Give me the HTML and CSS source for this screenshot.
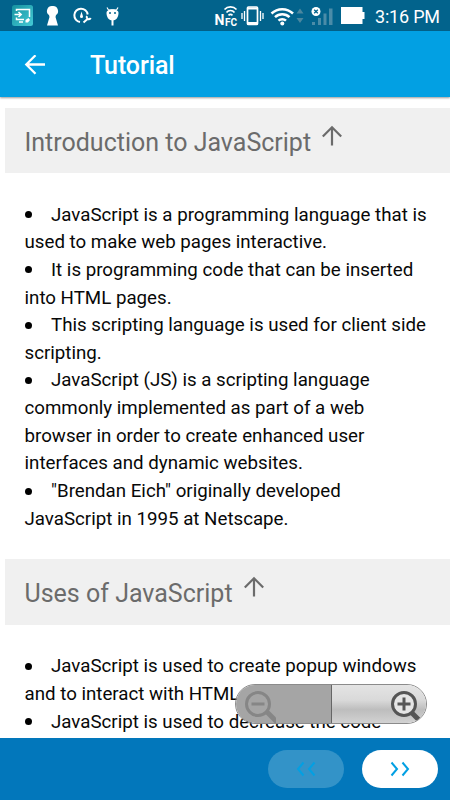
FILE: index.html
```html
<!DOCTYPE html>
<html lang="en">
<head>
<meta charset="utf-8">
<title>Tutorial</title>
<link rel="stylesheet" href="styles.css">
</head>
<body>
<div class="screen">
  <div class="status">
    <svg class="status-icons" width="370" height="31" viewBox="0 0 370 31" fill="none" stroke="#fff">
      <defs><linearGradient id="app" x1="0" y1="0" x2="1" y2="1"><stop offset="0" stop-color="#16919f"/><stop offset="1" stop-color="#45cbd6"/></linearGradient></defs>
      <rect x="12" y="5" width="21" height="21" rx="2.5" fill="url(#app)" stroke="none"/>
      <path d="M16.500 11V9.500H29.500V17M16.500 17.500v2h7.500M19 22h4M14.500 14.500h6M18.500 12l2.700 2.500L18.500 17" stroke-width="1.500"/>
      <path d="M25.500 20l3-2 1.500 2-2 2.500h-2.500z" fill="#fff" stroke="none"/>
      <path d="M52.500 6a5 5 0 0 1 3.500 9l-.5 2 2.500 8.500H47l2.500-8.500-.5-2a5 5 0 0 1 3.500-9z" fill="#fff" stroke="none"/>
      <path d="M80 22A6.700 6.700 0 1 1 87.700 14.500" stroke-width="2"/>
      <path d="M81.500 11.500l1.500 5a1.500 1.500 0 0 1-3 0z" fill="#fff" stroke="none"/>
      <path d="M83.500 22.500l4-3.500M87 16a2 2 0 0 0 3.700 2" stroke-width="2"/>
      <path d="M107 7.500l1.500 2.500h8l1.500-2.500" stroke-width="1.200"/>
      <path d="M106.500 13c0-5 12-5 12 0 0 4.500-2.500 7.500-6 7.500s-6-3-6-7.500z" fill="#fff" stroke="none"/>
      <path d="M112.500 20v5.500" stroke-width="2"/>
      <circle cx="110" cy="13" r="1" fill="#02638c" stroke="none"/><circle cx="115" cy="13" r="1" fill="#02638c" stroke="none"/>
      <path d="M224.500 9.500a8 8 0 0 1 12 0M226.500 12.500a5 5 0 0 1 8 0M228.500 15.300a3 3 0 0 1 4 0" stroke-width="1.700"/>
      <text class="nfc-n" x="214.500" y="24.500">N</text><text class="nfc-fc" x="225" y="25.500">FC</text>
      <rect x="247.500" y="7" width="10" height="17.500" rx="1" stroke-width="1.700"/>
      <path d="M247 8.500h11M247 23h11" stroke-width="2"/>
      <path d="M244.500 11v10M242 13v6M260.500 11v10M263 13v6" stroke-width="1.300"/>
      <path d="M271.500 13.500a15.500 15.500 0 0 1 21.500 0M275 17.200a10.500 10.500 0 0 1 14.500 0M278.500 20.700a5.300 5.300 0 0 1 7.500 0" stroke-width="2.500"/>
      <circle cx="282.300" cy="23.500" r="2" fill="#fff" stroke="none"/>
      <path d="M296.500 13.500l3.500-5 3.500 5zM296.500 18l3.500 5 3.500-5z" fill="#4b879f" stroke="none"/>
      <path d="M312 22h3v3h-3zM318 18h3v7h-3zM323.500 13.500h3v11.500h-3zM329 8.500h3.500v16.500H329z" fill="#4b8ca8" stroke="none"/>
      <circle cx="316" cy="11.500" r="4.500" fill="#fff" stroke="none"/>
      <path d="M314.200 9.700l3.600 3.600m0-3.600l-3.600 3.600" stroke="#02638c" stroke-width="1.300"/>
      <path d="M341 7h21.500v5h2v7h-2v5H341z" fill="#fff" stroke="none"/>
    </svg>
    <span class="clock">3:16 PM</span>
  </div>
  <header class="toolbar">
    <svg width="22" height="22" viewBox="0 0 22 22" fill="none" stroke="#fff" stroke-width="2.300"><path d="M21 9.500H3M11.500 .3L2.300 9.500l9.200 9.200"/></svg>
    <h1>Tutorial</h1>
  </header>
  <main class="content">
    <h2><span>Introduction to JavaScript</span><svg width="22" height="22" viewBox="0 0 22 22"><path d="M11 20.500V3M1.800 11.500L11 2.300l9.200 9.200"/></svg></h2>
    <ul>
      <li>JavaScript is a programming language that is<br>used to make web pages interactive.</li>
      <li>It is programming code that can be inserted<br>into HTML pages.</li>
      <li>This scripting language is used for client side<br>scripting.</li>
      <li>JavaScript (JS) is a scripting language<br>commonly implemented as part of a web<br>browser in order to create enhanced user<br>interfaces and dynamic websites.</li>
      <li>"Brendan Eich" originally developed<br>JavaScript in 1995 at Netscape.</li>
    </ul>
    <h2 class="second"><span>Uses of JavaScript</span><svg width="22" height="22" viewBox="0 0 22 22"><path d="M11 20.500V3M1.800 11.500L11 2.300l9.200 9.200"/></svg></h2>
    <ul>
      <li>JavaScript is used to create popup windows<br>and to interact with HTML</li>
      <li>JavaScript is used to decrease the code</li>
    </ul>
  </main>
  <div class="zoom">
    <div class="zoom-out"><svg width="40" height="38" viewBox="0 0 40 38" fill="none" stroke="#868686"><path d="M31 27l10 10" stroke-width="5"/><circle cx="22" cy="19" r="11.500" stroke-width="3"/><path d="M15.500 19h13" stroke-width="3"/></svg></div>
    <div class="zoom-in"><svg width="38" height="38" viewBox="0 0 38 38" fill="none" stroke="#555"><path d="M23 27l10 10" stroke-width="5"/><circle cx="16" cy="19" r="11.500" fill="#e5e5e5" stroke-width="3"/><path d="M9.500 19h13M16 12.500v13" stroke-width="3"/></svg></div>
  </div>
  <footer class="bottom">
    <div class="pill disabled"><svg width="20" height="16" viewBox="0 0 20 16"><path d="M7.500 1.500L2 8l5.500 6.500M18.500 1.500L13 8l5.500 6.500"/></svg></div>
    <div class="pill"><svg width="20" height="16" viewBox="0 0 20 16"><path d="M1.500 1.500L7 8l-5.500 6.500M12.500 1.500L18 8l-5.500 6.500"/></svg></div>
  </footer>
</div>
</body>
</html>
```
FILE: styles.css
```css
* { box-sizing: border-box; }
body { margin: 0; font-family: Roboto, sans-serif; background: #fff; }
.screen { width: 450px; height: 800px; display: flex; flex-direction: column; overflow: hidden; position: relative; }
.status { height: 31px; flex: none; background: #02638c; display: flex; color: #fff; }
.clock { font-size: 18px; line-height: 34px; margin-left: 5px; white-space: nowrap; letter-spacing: -.2px; }
.nfc-n, .nfc-fc { font-family: Roboto, sans-serif; font-weight: 700; fill: #fff; stroke: none; }
.nfc-n { font-size: 14px; }
.nfc-fc { font-size: 10px; }
.toolbar { height: 66px; flex: none; background: #02a0e3; display: flex; align-items: center; padding: 3px 0 0 24px; box-shadow: 0 1px 2px rgba(0,0,0,.4); z-index: 1; }
h1 { margin: 1px 0 0 44px; font-size: 25px; font-weight: 500; color: #fff; line-height: 30px; letter-spacing: -.1px; }
.content { flex: 1; min-height: 0; overflow: hidden; padding: 11px 0 0 5px; }
h2 { margin: 0; height: 65px; background: #f0f0f0; padding: 3px 0 0 19.500px; display: flex; align-items: center; color: #6b6b6b; font-size: 25px; font-weight: 400; white-space: nowrap; }
h2 svg { margin: -13px 0 0 10px; fill: none; stroke: #6b6b6b; stroke-width: 2.2; }
h2.second { height: 66px; }
ul { margin: 28.600px 0 25.400px; padding: 0 0 0 19.500px; list-style: none; font-size: 18.720px; line-height: 27.640px; color: #080808; white-space: nowrap; }
li::before { content: ""; display: inline-block; width: 7px; height: 7px; border-radius: 50%; background: #000; margin-right: 19.500px; vertical-align: 2.500px; }
.zoom { position: absolute; left: 235px; top: 684px; width: 192px; height: 40px; border-radius: 20px; display: flex; overflow: hidden; border: 1px solid #8b8b8b; z-index: 2; }
.zoom-out { width: 96px; flex: none; background: #a5a5a5; border-right: 1px solid #666; }
.zoom-in { flex: 1; background: linear-gradient(#e4e4e4, #d9d9d9 40%, #bdbdbd 65%, #d2d2d2); padding-left: 56px; }
.bottom { height: 62px; flex: none; background: #0277bb; display: flex; justify-content: flex-end; align-items: center; gap: 18px; padding-right: 12px; }
.pill { width: 76px; height: 38px; border-radius: 19px; background: #fff; display: flex; align-items: center; justify-content: center; }
.pill.disabled { background: #3393c8; }
.pill svg { fill: none; stroke: #02a0e3; stroke-width: 2; }
```
